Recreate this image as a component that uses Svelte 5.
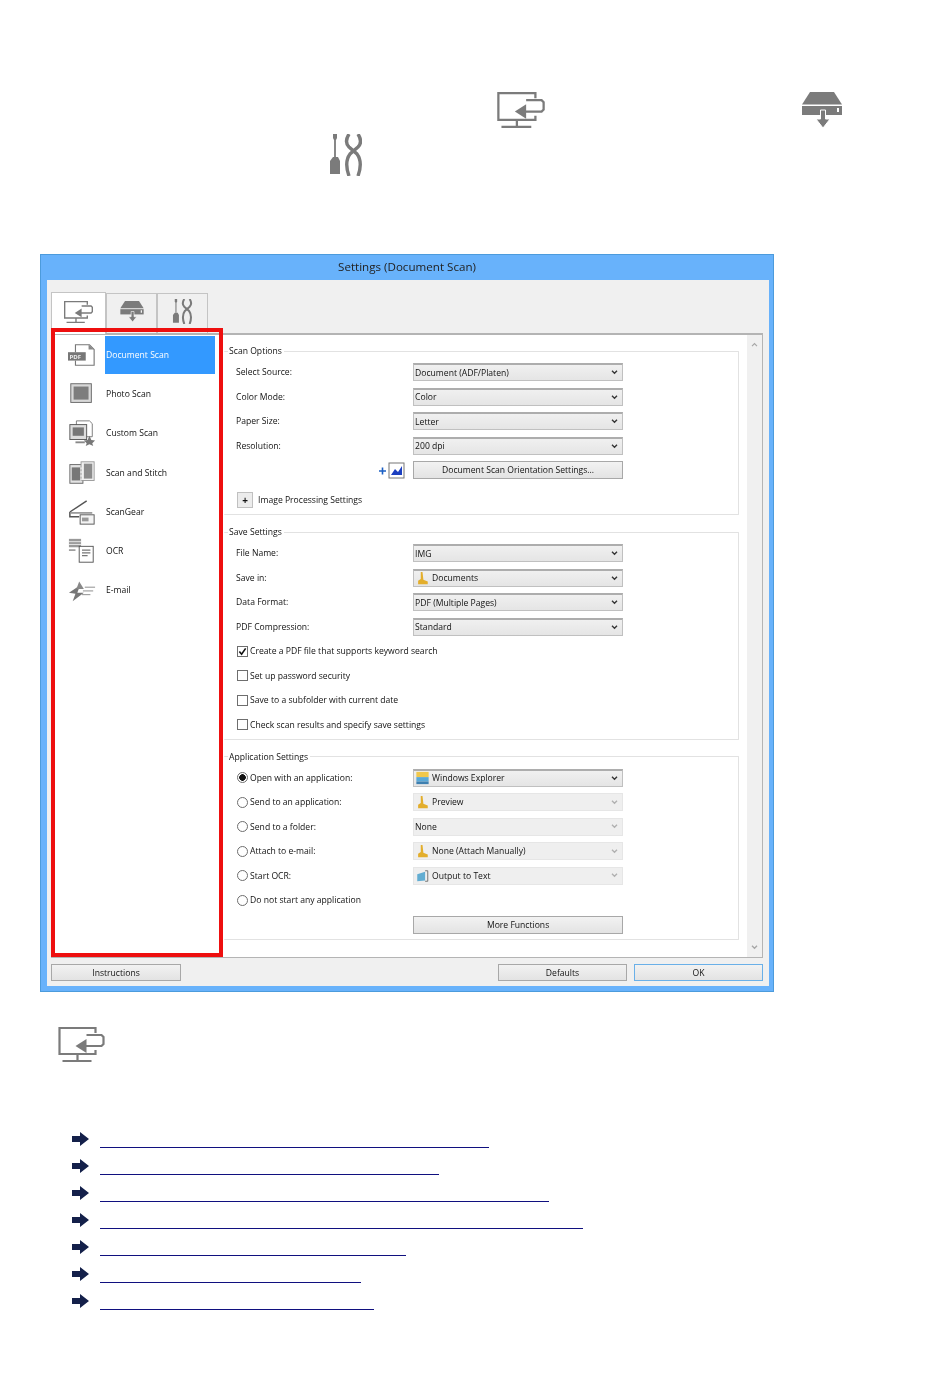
<script>
  const links = [389, 339, 449, 483, 306, 261, 274];

  const listItems = [
    { id: 'pdf', label: 'Document Scan', selected: true },
    { id: 'photo', label: 'Photo Scan' },
    { id: 'custom', label: 'Custom Scan' },
    { id: 'stitch', label: 'Scan and Stitch' },
    { id: 'gear', label: 'ScanGear' },
    { id: 'ocr', label: 'OCR' },
    { id: 'mail', label: 'E-mail' }
  ];

  const scanRows = [
    ['Select Source:', 'Document (ADF/Platen)'],
    ['Color Mode:', 'Color'],
    ['Paper Size:', 'Letter'],
    ['Resolution:', '200 dpi']
  ];

  const saveChecks = [
    { label: 'Create a PDF file that supports keyword search', on: true },
    { label: 'Set up password security' },
    { label: 'Save to a subfolder with current date' },
    { label: 'Check scan results and specify save settings' }
  ];

  const appRows = [
    { label: 'Open with an application:', value: 'Windows Explorer', icon: 'explorer', on: true },
    { label: 'Send to an application:', value: 'Preview', icon: 'app' },
    { label: 'Send to a folder:', value: 'None' },
    { label: 'Attach to e-mail:', value: 'None (Attach Manually)', icon: 'app' },
    { label: 'Start OCR:', value: 'Output to Text', icon: 'text' }
  ];
</script>

{#snippet monitor(cls)}
  <svg class={cls} viewBox="0 0 46 35" fill="none" stroke="#7b7b7b" stroke-width="2.2">
    <path d="M37 6V1H1V27H37V23" />
    <path d="M28 8H43L45 10V17L43 19H27" />
    <path d="M17 19L28 12V26Z" fill="#7b7b7b" stroke="none" />
    <path d="M19 27V34M4 34H33" />
  </svg>
{/snippet}

{#snippet drive(cls)}
  <svg class={cls} viewBox="0 0 40 36">
    <path d="M8 0H32L40 12.500H0Z" fill="#7b7b7b" />
    <path d="M0 14H40V23H0Z" fill="#7b7b7b" />
    <path d="M35 16H37V20H35Z" fill="#fff" />
    <path d="M18.500 18H23.500V27H28L21 36L14 27H18.500Z" fill="#7b7b7b" stroke="#fff" stroke-width="1" />
  </svg>
{/snippet}

{#snippet tools(cls)}
  <svg class={cls} viewBox="0 0 32 42" fill="none" stroke="#7b7b7b">
    <path d="M5 1V23" stroke-width="1.800" />
    <path d="M3 0H7V4L6 6H4L3 4Z" fill="#7b7b7b" stroke="none" />
    <path d="M3 23H8L10 27V40H0V27Z" fill="#7b7b7b" stroke="none" />
    <path d="M19 0Q14 8 19 13L27 20Q33 28 28 42" stroke-width="3.400" />
    <path d="M28 0Q33 8 28 13L20 20Q14 28 19 42" stroke-width="3.400" />
  </svg>
{/snippet}

{#snippet listIcon(id)}
  <svg class="list-icon" viewBox="0 0 30 28">
    {#if id === 'pdf'}
      <path d="M8 11V3H23L28 8V25H8V20" fill="#fff" stroke="#777" stroke-width="1.200" />
      <path d="M22 3V8H28Z" fill="#888" />
      <rect x="0" y="11" width="19" height="9" fill="#777" />
      <text x="1.500" y="18.300" class="pdf-text">PDF</text>
    {:else if id === 'photo'}
      <rect x="3" y="3" width="22" height="20" fill="#d8d8d8" stroke="#666" />
      <rect x="6" y="6" width="16" height="14" fill="#7d7d7d" />
    {:else if id === 'custom'}
      <path d="M9 1H23L26 4V18H9Z" fill="#fff" stroke="#777" />
      <rect x="2" y="5" width="18" height="16" fill="#ddd" stroke="#555" />
      <rect x="5" y="8" width="12" height="9" fill="#777" />
      <path d="M8 23H18V25H8Z" fill="#888" />
      <path d="M23 17L25 21.500L29 22L26 25L27 28L23 26L19 28L20 25L17 22L21 21.500Z" fill="#777" />
    {:else if id === 'stitch'}
      <rect x="2" y="5" width="14" height="20" fill="#e4e4e4" stroke="#666" />
      <rect x="4" y="8" width="9" height="14" fill="#777" />
      <rect x="14" y="2" width="14" height="20" fill="#f0f0f0" stroke="#999" />
      <rect x="17" y="4" width="9" height="16" fill="#8c8c8c" />
      <path d="M14 8V22" stroke="#fff" stroke-width="1" stroke-dasharray="2 2" />
    {:else if id === 'gear'}
      <path d="M2 14L20 2M2 14V19H12" fill="none" stroke="#555" stroke-width="1.600" />
      <path d="M3 15H26" stroke="#777" stroke-width="1.400" />
      <rect x="13" y="17" width="15" height="10" fill="#f4f4f4" stroke="#555" />
      <rect x="15" y="20" width="7" height="4" fill="#999" />
    {:else if id === 'ocr'}
      <rect x="1" y="1" width="13" height="9" fill="#999" />
      <path d="M1 4H14M1 7H14" stroke="#fff" stroke-width="0.800" />
      <path d="M1 13H8" stroke="#666" stroke-width="1.200" />
      <rect x="12" y="9" width="15" height="17" fill="#fff" stroke="#555" />
      <path d="M15 13H24M15 16H24M15 19H21" stroke="#777" stroke-width="1.400" />
    {:else}
      <path d="M1 17L13 9L10 17H17L5 26L8 18Z" fill="#777" />
      <path d="M12 5L17 13H9Z" fill="#888" />
      <path d="M18 11H29M16 15H27M15 19H24" stroke="#888" stroke-width="1" />
    {/if}
  </svg>
{/snippet}

{#snippet selectIcon(kind)}
  <svg class="select-icon" viewBox="0 0 16 16">
    {#if kind === 'explorer'}
      <rect x="1" y="1" width="14" height="6" fill="#f1c84c" />
      <rect x="1" y="7" width="14" height="5" fill="#5aa9d8" />
      <path d="M1 12H15V15H1Z" fill="#3d7fb0" />
    {:else if kind === 'app'}
      <path d="M6 1L8 1L9 10L14 12V15H3V11L6 9Z" fill="#e3ae2c" />
    {:else}
      <path d="M2 6L11 3V13L2 14Z" fill="#62add2" />
      <path d="M11 2H14V14H11" fill="none" stroke="#666" />
    {/if}
  </svg>
{/snippet}

{#snippet chevron(cls)}
  <svg class={cls} viewBox="0 0 8 6" fill="none" stroke="currentColor" stroke-width="1.600">
    <path d="M1 1L4 4L7 1" />
  </svg>
{/snippet}

{#snippet dropdown(value, icon, disabled)}
  <div class="select" class:disabled>
    {#if icon}{@render selectIcon(icon)}{/if}
    <span class="select-value">{value}</span>
    {@render chevron('select-arrow')}
  </div>
{/snippet}

<main class="page">
  <div class="intro-line first">
    {@render monitor('big-monitor')}
    {@render drive('big-drive')}
  </div>
  <div class="intro-line second">
    {@render tools('big-tools')}
  </div>

  <section class="window">
    <header class="title">Settings (Document Scan)</header>
    <div class="client">
      <div class="tabs">
        <div class="tab active">{@render monitor('tab-monitor')}</div>
        <div class="tab">{@render drive('tab-drive')}</div>
        <div class="tab">{@render tools('tab-tools')}</div>
      </div>

      <div class="panel">
        <nav class="list">
          {#each listItems as item}
            <div class="item">
              {@render listIcon(item.id)}
              <span class="item-label" class:selected={item.selected}>{item.label}</span>
            </div>
          {/each}
        </nav>

        <div class="settings">
          <fieldset class="group">
            <legend>Scan Options</legend>
            {#each scanRows as row}
              <div class="row">
                <span class="label">{row[0]}</span>
                {@render dropdown(row[1])}
              </div>
            {/each}
            <div class="row">
              <span class="label orient-cell">
                <svg class="orient" viewBox="0 0 26 19">
                  <path d="M0 10H7M3.500 6.500V13.500" stroke="#1b5fc4" stroke-width="1.600" />
                  <rect x="10" y="2" width="15" height="15" fill="#fff" stroke="#777" />
                  <path d="M12 14L16 8L19 11L23 5V14Z" fill="#1c3fc0" />
                </svg>
              </span>
              <div class="button wide">Document Scan Orientation Settings...</div>
            </div>
            <div class="row expander-row">
              <span class="expander">+</span>
              <span>Image Processing Settings</span>
            </div>
          </fieldset>

          <fieldset class="group">
            <legend>Save Settings</legend>
            <div class="row">
              <span class="label">File Name:</span>
              {@render dropdown('IMG')}
            </div>
            <div class="row">
              <span class="label">Save in:</span>
              {@render dropdown('Documents', 'app')}
            </div>
            <div class="row">
              <span class="label">Data Format:</span>
              {@render dropdown('PDF (Multiple Pages)')}
            </div>
            <div class="row">
              <span class="label">PDF Compression:</span>
              {@render dropdown('Standard')}
            </div>
            {#each saveChecks as check}
              <div class="row">
                <span class="check">
                  {#if check.on}
                    <svg viewBox="0 0 10 10" fill="none" stroke="#111" stroke-width="1.800">
                      <path d="M1.500 5L4 8L8.500 1.500" />
                    </svg>
                  {/if}
                </span>
                <span>{check.label}</span>
              </div>
            {/each}
          </fieldset>

          <fieldset class="group">
            <legend>Application Settings</legend>
            {#each appRows as row}
              <div class="row">
                <span class="label radio-label">
                  <span class="radio" class:on={row.on}></span>
                  {row.label}
                </span>
                {@render dropdown(row.value, row.icon, !row.on)}
              </div>
            {/each}
            <div class="row">
              <span class="label radio-label">
                <span class="radio"></span>
                Do not start any application
              </span>
            </div>
            <div class="row">
              <span class="label"></span>
              <div class="button wide">More Functions</div>
            </div>
          </fieldset>
        </div>

        <div class="scrollbar">
          <svg class="scroll-up" viewBox="0 0 8 6" fill="none" stroke="currentColor" stroke-width="1.400">
            <path d="M1 5L4 2L7 5" />
          </svg>
          {@render chevron('scroll-down')}
        </div>
      </div>

      <footer class="footer">
        <div class="button foot first-foot">Instructions</div>
        <div class="foot-right">
          <div class="button foot">Defaults</div>
          <div class="button foot primary">OK</div>
        </div>
      </footer>

      <div class="highlight"></div>
    </div>
  </section>

  {@render monitor('section-monitor')}

  <ul class="links">
    {#each links as width}
      <li>
        <svg class="arrow" viewBox="0 0 17 14">
          <path d="M0 4H8V0L17 7L8 14V10H0Z" fill="#14204a" />
        </svg>
        <span class="link" style="width: {width}px"></span>
      </li>
    {/each}
  </ul>
</main>

<style>
  :global(body) {
    background: #fff;
  }

  .page {
    box-sizing: border-box;
    height: 1397px;
    padding-top: 92px;
    background: #fff;
    font-family: "Open Sans", "Liberation Sans", sans-serif;
    overflow: hidden;
  }

  .intro-line {
    display: flex;
  }

  .intro-line.first {
    padding-left: 497px;
    height: 36px;
    gap: 257px;
  }

  .intro-line.second {
    margin-top: 6px;
    padding-left: 330px;
    height: 42px;
  }

  :global(.big-monitor) {
    width: 48px;
    height: 36px;
  }

  :global(.big-drive) {
    width: 40px;
    height: 36px;
  }

  :global(.big-tools) {
    width: 32px;
    height: 42px;
  }

  .window {
    position: relative;
    box-sizing: border-box;
    width: 734px;
    height: 738px;
    margin: 78px 0 35px 40px;
    background: #68b2fb;
    border: 1px solid #4c9bdc;
    color: #111;
    font-size: 8.6px;
    filter: blur(0.35px);
  }

  .title {
    height: 25px;
    line-height: 24px;
    text-align: center;
    font-size: 11.6px;
    color: #222;
  }

  .client {
    position: relative;
    box-sizing: border-box;
    height: 706px;
    margin: 0 4px 0 6px;
    padding: 0 6px 0 4px;
    background: #f0f0f0;
  }

  .tabs {
    display: flex;
    align-items: flex-end;
    height: 53px;
  }

  .tab {
    box-sizing: border-box;
    display: flex;
    align-items: center;
    justify-content: center;
    width: 51px;
    height: 40px;
    border: 1px solid #c4c4c4;
    border-bottom: none;
    padding-bottom: 5px;
  }

  .tab.active {
    position: relative;
    width: 55px;
    height: 42px;
    margin-bottom: -1px;
    background: #fff;
    padding-bottom: 4px;
  }

  :global(.tab-monitor) {
    width: 29px;
    height: 22px;
  }

  :global(.tab-drive) {
    width: 26px;
    height: 21px;
  }

  :global(.tab-tools) {
    width: 21px;
    height: 25px;
  }

  .panel {
    display: flex;
    box-sizing: border-box;
    height: 625px;
    background: #fff;
    border: 1px solid #b4b4b4;
    border-top-width: 2px;
  }

  .list {
    box-sizing: border-box;
    width: 173px;
    padding-top: 1px;
  }

  .item {
    display: flex;
    align-items: stretch;
    height: 39.2px;
    padding-left: 16px;
  }

  .list-icon {
    width: 28px;
    height: 28px;
    margin: 5px 9px 0 0;
    flex: none;
  }

  .pdf-text {
    font-size: 6.5px;
    font-weight: 700;
    fill: #eee;
  }

  .item-label {
    display: flex;
    align-items: center;
    width: 109px;
    padding-left: 1px;
    height: 38px;
  }

  .item-label.selected {
    background: #3399ff;
    color: #fff;
  }

  .settings {
    box-sizing: border-box;
    width: 515px;
    flex: none;
    padding-top: 9px;
    display: flex;
    flex-direction: column;
    gap: 10px;
  }

  .group {
    display: flex;
    flex-direction: column;
    gap: 6.5px;
    min-width: 0;
    margin: 0;
    padding: 5px 5px 5px 12px;
    border: 1px solid #e2e2e2;
    border-left: none;
    border-radius: 1px;
  }

  .group legend {
    margin-left: -8px;
    padding: 0 2px 0 1px;
    line-height: 14px;
    height: 14px;
  }

  .row {
    display: flex;
    align-items: center;
    height: 18px;
    flex: none;
  }

  .label {
    width: 177px;
    flex: none;
  }

  .select {
    box-sizing: border-box;
    display: flex;
    align-items: center;
    gap: 2px;
    width: 210px;
    height: 18px;
    padding: 0 4px 0 1px;
    background: linear-gradient(#f0f0f0, #e5e5e5);
    border: 1px solid #c0c0c0;
    border-top: 2px solid #adadad;
    color: #111;
  }

  .select.disabled {
    background: #efefef;
    border: 1px solid #e6e6e6;
  }

  .select-value {
    flex: 1;
  }

  :global(.select-icon) {
    width: 15px;
    height: 14px;
    flex: none;
  }

  :global(.select-arrow) {
    width: 7px;
    height: 5px;
    color: #333;
  }

  .select.disabled :global(.select-arrow) {
    color: #b0b0b0;
  }

  .button {
    box-sizing: border-box;
    display: flex;
    align-items: center;
    justify-content: center;
    height: 18px;
    background: linear-gradient(#f2f2f2, #e3e3e3);
    border: 1px solid #a8a8a8;
  }

  .button.wide {
    width: 210px;
  }

  .orient-cell {
    display: flex;
    justify-content: flex-end;
    padding-right: 8px;
    box-sizing: border-box;
  }

  .orient {
    width: 26px;
    height: 19px;
  }

  .expander-row {
    margin-top: 5.5px;
    gap: 5px;
  }

  .expander {
    box-sizing: border-box;
    display: flex;
    align-items: center;
    justify-content: center;
    width: 16px;
    height: 16px;
    margin-left: 1px;
    background: #ececec;
    border: 1px solid #c0c0c0;
    font-size: 10px;
    font-weight: 700;
  }

  .check {
    box-sizing: border-box;
    display: flex;
    width: 11px;
    height: 11px;
    margin: 0 2px 0 1px;
    flex: none;
    background: #fff;
    border: 1px solid #6e6e6e;
  }

  .radio-label {
    display: flex;
    align-items: center;
    gap: 2px;
  }

  .radio {
    box-sizing: border-box;
    display: block;
    width: 11px;
    height: 11px;
    margin-left: 1px;
    flex: none;
    border: 1px solid #6e6e6e;
    border-radius: 50%;
    background: #fff;
  }

  .radio.on {
    background: radial-gradient(circle, #111 0 3px, #fff 3.6px);
  }

  .scrollbar {
    display: flex;
    flex-direction: column;
    justify-content: space-between;
    align-items: center;
    width: 15px;
    margin-left: 8px;
    padding: 7px 0;
    box-sizing: border-box;
    background: #f0f0f0;
    color: #a6a6a6;
  }

  .scroll-up,
  :global(.scroll-down) {
    width: 7px;
    height: 5px;
  }

  .footer {
    display: flex;
    justify-content: space-between;
    margin-top: 6px;
  }

  .foot-right {
    display: flex;
    gap: 7px;
  }

  .button.foot {
    width: 129px;
    height: 17px;
  }

  .button.first-foot {
    width: 130px;
  }

  .button.primary {
    border-color: #6ab0e8;
  }

  .highlight {
    position: absolute;
    z-index: 2;
    box-sizing: border-box;
    left: 4px;
    top: 48px;
    width: 172px;
    height: 629px;
    border: 4px solid #ee0f0f;
  }

  :global(.section-monitor) {
    display: block;
    width: 47px;
    height: 35px;
    margin-left: 58px;
  }

  .links {
    list-style: none;
    margin: 70px 0 0 72px;
    padding: 0;
  }

  .links li {
    display: flex;
    align-items: flex-start;
    gap: 11px;
    height: 27px;
  }

  .arrow {
    width: 17px;
    height: 14px;
    flex: none;
  }

  .link {
    display: block;
    height: 15px;
    border-bottom: 1px solid #10107f;
  }
</style>
